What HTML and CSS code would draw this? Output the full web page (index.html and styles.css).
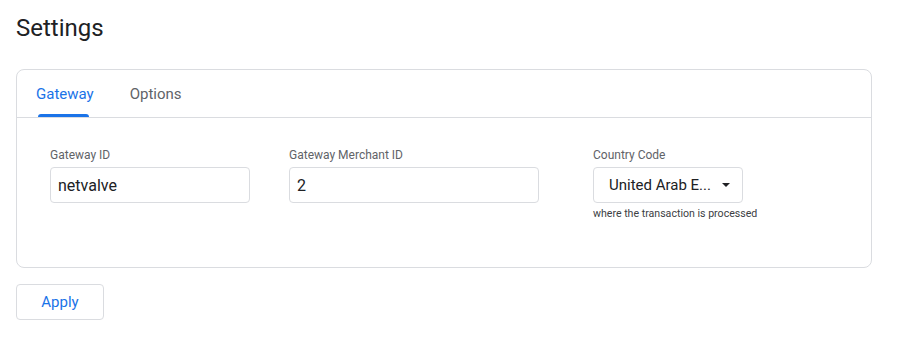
FILE: index.html
```html
<!DOCTYPE html>
<html>
<head>
<meta charset="utf-8">
<link rel="stylesheet" href="styles.css">
</head>
<body>
<div class="page">
  <h1 class="title">Settings</h1>
  <div class="card">
    <div class="tabs">
      <div class="tab active">Gateway</div>
      <div class="tab">Options</div>
    </div>
    <div class="content">
      <div class="field f1">
        <label class="label">Gateway ID</label>
        <div class="input">netvalve</div>
      </div>
      <div class="field f2">
        <label class="label">Gateway Merchant ID</label>
        <div class="input">2</div>
      </div>
      <div class="field f3">
        <label class="label">Country Code</label>
        <div class="select">
          <span class="select-text">United Arab E...</span>
          <svg class="arrow" width="8" height="4" viewBox="0 0 8 4"><path d="M0 0h8L4 4z" fill="#202124"/></svg>
        </div>
        <div class="helper">where the transaction is processed</div>
      </div>
    </div>
  </div>
  <button class="btn">Apply</button>
</div>
</body>
</html>
```
FILE: styles.css
```css
html, body {
  margin: 0;
  padding: 0;
  background: #fff;
}
.page {
  padding: 12px 16px;
  font-family: Roboto, "Liberation Sans", sans-serif;
  color: #202124;
  width: 856px;
}
.title {
  margin: 0;
  font-size: 24px;
  line-height: 32px;
  font-weight: 400;
  color: #202124;
}
.card {
  margin-top: 25px;
  border: 1px solid #dadce0;
  border-radius: 8px;
  box-sizing: border-box;
  width: 856px;
}
.tabs {
  display: flex;
  height: 47px;
  border-bottom: 1px solid #dadce0;
  padding-left: 3px;
  gap: 4px;
}
.tab {
  position: relative;
  display: flex;
  align-items: center;
  padding: 0 16px;
  font-size: 15px;
  font-weight: 400;
  color: #5f6368;
}
.tab.active {
  color: #1a73e8;
}
.tab.active::after {
  content: "";
  position: absolute;
  left: 18px;
  right: 21px;
  bottom: 0;
  height: 3px;
  background: #1a73e8;
  border-radius: 3px 3px 0 0;
}
.content {
  display: flex;
  padding: 29px 33px 44px;
  height: 149px;
  box-sizing: border-box;
}
.field {
  display: flex;
  flex-direction: column;
}
.f1 { width: 200px; margin-right: 39px; }
.f2 { width: 250px; margin-right: 54px; }
.f3 { width: 200px; }
.label {
  font-size: 12px;
  line-height: 16px;
  color: #5f6368;
  margin-bottom: 4px;
}
.input {
  height: 36px;
  box-sizing: border-box;
  border: 1px solid #dadce0;
  border-radius: 4px;
  padding: 0 7px;
  display: flex;
  align-items: center;
  font-size: 16px;
  color: #202124;
}
.select {
  width: 150px;
  height: 36px;
  box-sizing: border-box;
  border: 1px solid #dadce0;
  border-radius: 4px;
  padding: 0 12px 0 15px;
  display: flex;
  align-items: center;
  font-size: 15px;
  font-weight: 400;
  color: #202124;
}
.arrow {
  display: block;
  margin-left: auto;
}
.helper {
  margin-top: 3px;
  font-size: 10.6px;
  line-height: 16px;
  color: #3c4043;
  white-space: nowrap;
}
.btn {
  margin-top: 16px;
  width: 88px;
  height: 36px;
  border: 1px solid #dadce0;
  border-radius: 4px;
  background: #fff;
  font-family: Roboto, "Liberation Sans", sans-serif;
  font-size: 15px;
  font-weight: 400;
  color: #1a73e8;
  padding: 0;
}
```
